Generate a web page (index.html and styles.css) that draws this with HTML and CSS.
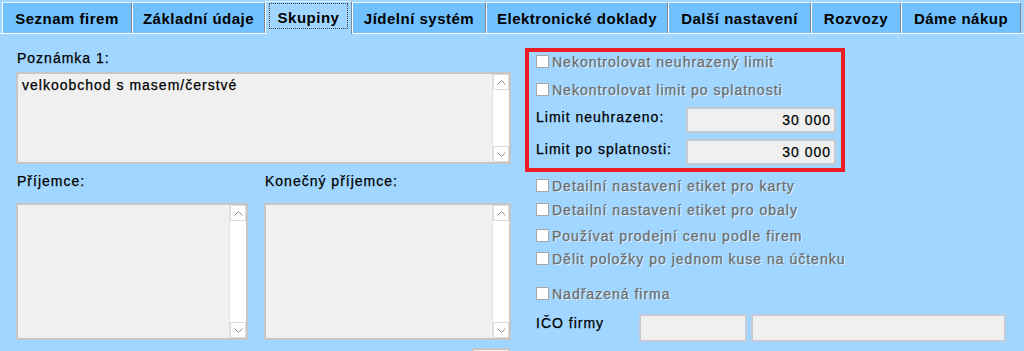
FILE: index.html
```html
<!DOCTYPE html>
<html lang="cs">

<head>
    <meta charset="UTF-8">
    <meta name="viewport" content="width=device-width, initial-scale=1.0">
    <title>Skupiny</title>

    <link rel="stylesheet" href="styles.css">

</head>

<body>

    <div class="tabs">
        <div class="tab">Seznam firem</div>
        <div class="tab">Základní údaje</div>
        <div class="tab tab-active"><span class="focus">Skupiny</span></div>
        <div class="tab">Jídelní systém</div>
        <div class="tab">Elektronické doklady</div>
        <div class="tab">Další nastavení</div>
        <div class="tab">Rozvozy</div>
        <div class="tab">Dáme nákup</div>
    </div>

    <div class="panel">

        <!-- levy sloupec: poznamky a prijemci -->
        <div class="col-left">
            <div class="label">Poznámka 1:</div>
            <div class="memo memo-note">
                <div class="memo-text">velkoobchod s masem/čerstvé</div>
                <div class="sb">
                    <div class="sb-btn"><svg width="9" height="5" viewBox="0 0 9 5"><polyline points="0.5,4.5 4.5,0.5 8.5,4.5" /></svg></div>
                    <div class="sb-track"></div>
                    <div class="sb-btn"><svg width="9" height="5" viewBox="0 0 9 5"><polyline points="0.5,0.5 4.5,4.5 8.5,0.5" /></svg></div>
                </div>
            </div>

            <div class="pair">
                <div class="field">
                    <div class="label label-pair">Příjemce:</div>
                    <div class="memo memo-tall">
                        <div class="memo-text"></div>
                        <div class="sb">
                            <div class="sb-btn"><svg width="9" height="5" viewBox="0 0 9 5"><polyline points="0.5,4.5 4.5,0.5 8.5,4.5" /></svg></div>
                            <div class="sb-track"></div>
                            <div class="sb-btn"><svg width="9" height="5" viewBox="0 0 9 5"><polyline points="0.5,0.5 4.5,4.5 8.5,0.5" /></svg></div>
                        </div>
                    </div>
                </div>
                <div class="field">
                    <div class="label label-pair">Konečný příjemce:</div>
                    <div class="memo memo-tall">
                        <div class="memo-text"></div>
                        <div class="sb">
                            <div class="sb-btn"><svg width="9" height="5" viewBox="0 0 9 5"><polyline points="0.5,4.5 4.5,0.5 8.5,4.5" /></svg></div>
                            <div class="sb-track"></div>
                            <div class="sb-btn"><svg width="9" height="5" viewBox="0 0 9 5"><polyline points="0.5,0.5 4.5,4.5 8.5,0.5" /></svg></div>
                        </div>
                    </div>
                </div>
            </div>

            <div class="stub"></div>
        </div>

        <!-- pravy sloupec: limity a volby -->
        <div class="col-right">

            <div class="limits">
                <div class="check check-first"><span class="box"></span>Nekontrolovat neuhrazený limit</div>
                <div class="check check-second"><span class="box"></span>Nekontrolovat limit po splatnosti</div>
                <div class="limit-row">
                    <div class="limit-label">Limit neuhrazeno:</div>
                    <input class="num" value="30 000" readonly>
                </div>
                <div class="limit-row limit-row-2">
                    <div class="limit-label">Limit po splatnosti:</div>
                    <input class="num" value="30 000" readonly>
                </div>
            </div>

            <div class="options">
                <div class="check opt-karty"><span class="box"></span>Detailní nastavení etiket pro karty</div>
                <div class="check opt-obaly"><span class="box"></span>Detailní nastavení etiket pro obaly</div>
                <div class="check opt-cena"><span class="box"></span>Používat prodejní cenu podle firem</div>
                <div class="check opt-delit"><span class="box"></span>Dělit položky po jednom kuse na účtenku</div>
                <div class="check opt-nadr"><span class="box"></span>Nadřazená firma</div>

                <div class="ico-row">
                    <div class="ico-label">IČO firmy</div>
                    <input class="ico ico-a" readonly>
                    <input class="ico ico-b" readonly>
                </div>
            </div>

        </div>

    </div>

</body>

</html>
```

FILE: styles.css
```css
body {
    margin: 0;
    height: 351px;
    overflow: hidden;
    background-color: #a0d6ff;
    font-family: 'Liberation Sans', Arial, sans-serif;
    font-size: 14px;
    line-height: 16px;
    letter-spacing: 1px;
    -webkit-text-stroke: 0.25px;
    color: #000;
}

/* zalozky */

.tabs {
    display: grid;
    grid-template-columns: 130px 133px 87px 134px 182px 143px 90px 120px;
    align-items: end;
    height: 33px;
    padding-left: 2px;
}

.tab {
    box-sizing: border-box;
    height: 31px;
    padding-top: 8px;
    background-color: #72c1ff;
    border-top: 1px solid #e8f4ff;
    border-left: 1px solid #ffffff;
    border-right: 1px solid #7d8994;
    font-size: 15px;
    font-weight: bold;
    letter-spacing: 0.5px;
    -webkit-text-stroke: 0;
    text-align: center;
    white-space: nowrap;
}

.tab-active {
    position: relative;
    z-index: 1;
    height: 33px;
    margin-bottom: -1px;
    padding: 1px 3px 0 3px;
    background-color: #a0d6ff;
}

.focus {
    display: block;
    box-sizing: border-box;
    height: 26px;
    padding-top: 6px;
    border: 1px dotted #3a3a3a;
}

/* panel */

.panel {
    display: grid;
    grid-template-columns: 495px 1fr;
    column-gap: 14px;
    height: 318px;
    padding-left: 16px;
    border-top: 1px solid #ffffff;
}

.label {
    margin-top: 16px;
    padding-left: 1px;
}

.memo {
    display: flex;
    box-sizing: border-box;
    background-color: #f0f0f0;
    border: 2px solid #c6c6c6;
}

.memo-note {
    margin-top: 6px;
    height: 92px;
}

.memo-text {
    flex: 1;
    padding: 3px 4px;
}

.sb {
    display: flex;
    flex-direction: column;
    width: 16px;
    background-color: #ffffff;
    border-left: 1px solid #e2e2e2;
}

.sb-btn {
    display: flex;
    align-items: center;
    justify-content: center;
    height: 16px;
    box-sizing: border-box;
    border: 1px solid #dcdcdc;
}

.sb-btn svg polyline {
    fill: none;
    stroke: #8a8a8a;
    stroke-width: 1;
}

.sb-track {
    flex: 1;
}

.pair {
    display: grid;
    grid-template-columns: 232px 247px;
    column-gap: 16px;
}

.label-pair {
    margin-top: 9px;
}

.memo-tall {
    margin-top: 14px;
    height: 137px;
}

.stub {
    width: 38px;
    height: 20px;
    margin: 8px 1px 0 auto;
    box-sizing: border-box;
    background-color: #f0f0f0;
    border: 2px solid #c6c6c6;
}

/* pravy sloupec */

.limits {
    box-sizing: border-box;
    width: 320px;
    margin-top: 14px;
    padding: 2px 5px 3px 7px;
    border: 4px solid #ed1c24;
}

.check {
    display: flex;
    align-items: flex-start;
    height: 16px;
    color: #6d6d6d;
    text-shadow: 1px 1px 0 rgba(255, 255, 255, 0.75);
    white-space: nowrap;
}

.box {
    width: 13px;
    height: 13px;
    box-sizing: border-box;
    margin: 1px 3px 0 0;
    background-color: #ffffff;
    border: 1px solid #a8a8a8;
}

.check-second {
    margin-top: 12px;
}

.limit-row {
    display: flex;
    margin-top: 9px;
}

.limit-row-2 {
    margin-top: 6px;
}

.limit-label {
    width: 150px;
    margin-top: 2px;
}

.num {
    box-sizing: border-box;
    width: 150px;
    height: 26px;
    margin: 0;
    padding: 0 3px 0 0;
    background-color: #f0f0f0;
    border: 2px solid #c3ccd5;
    font: inherit;
    letter-spacing: 1px;
    text-align: right;
    color: #000;
    outline: none;
}

.options {
    padding-left: 11px;
}

.opt-karty { margin-top: 6px; }
.opt-obaly { margin-top: 8px; }
.opt-cena { margin-top: 10px; }
.opt-delit { margin-top: 7px; }
.opt-nadr { margin-top: 19px; }

.ico-row {
    display: flex;
    margin-top: 12px;
}

.ico-label {
    width: 103px;
    margin-top: 1px;
}

.ico {
    box-sizing: border-box;
    height: 28px;
    margin: 0;
    background-color: #f0f0f0;
    border: 2px solid #c3ccd5;
    outline: none;
}

.ico-a {
    width: 108px;
    margin-right: 4px;
}

.ico-b {
    width: 255px;
}
```
